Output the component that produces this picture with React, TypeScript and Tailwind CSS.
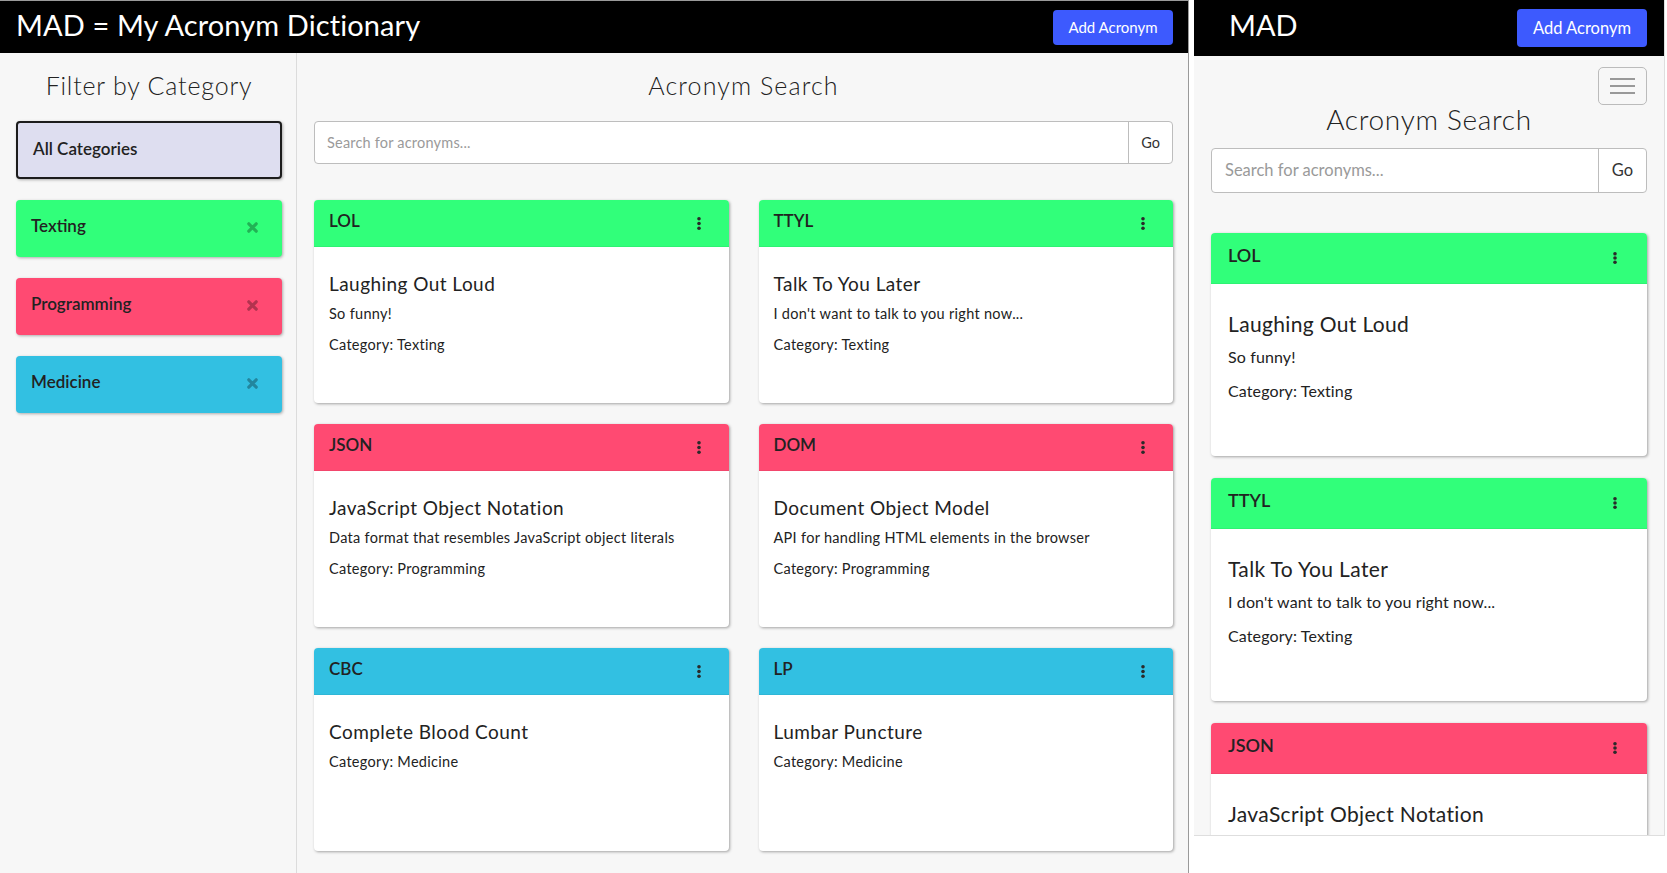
import React from "react";

const FONT = { fontFamily: "Lato, 'Open Sans', sans-serif" };

type Item = { abbr: string; name: string; desc?: string; cat: "Texting" | "Programming" | "Medicine" };

const CAT_BG: Record<string, string> = {
  Texting: "bg-[#31ff7a]",
  Programming: "bg-[#ff4a72]",
  Medicine: "bg-[#32c0e2]",
};

const ITEMS: Item[] = [
  { abbr: "LOL", name: "Laughing Out Loud", desc: "So funny!", cat: "Texting" },
  { abbr: "TTYL", name: "Talk To You Later", desc: "I don't want to talk to you right now...", cat: "Texting" },
  { abbr: "JSON", name: "JavaScript Object Notation", desc: "Data format that resembles JavaScript object literals", cat: "Programming" },
  { abbr: "DOM", name: "Document Object Model", desc: "API for handling HTML elements in the browser", cat: "Programming" },
  { abbr: "CBC", name: "Complete Blood Count", cat: "Medicine" },
  { abbr: "LP", name: "Lumbar Puncture", cat: "Medicine" },
];

function Kebab({ h = 13 }: { h?: number }) {
  return (
    <svg width="4" height={h} viewBox={`0 0 4 ${h}`} className="block">
      <circle cx="2" cy="1.8" r="1.8" fill="#2a2a2a" />
      <circle cx="2" cy={h / 2} r="1.8" fill="#2a2a2a" />
      <circle cx="2" cy={h - 1.8} r="1.8" fill="#2a2a2a" />
    </svg>
  );
}

function XIcon() {
  return (
    <svg width="11" height="11" viewBox="0 0 11 11" className="block">
      <path d="M1.8 1.8 L9.2 9.2 M9.2 1.8 L1.8 9.2" stroke="rgba(0,0,0,0.3)" strokeWidth="3.2" strokeLinecap="round" />
    </svg>
  );
}

function DesktopCard({ it }: { it: Item }) {
  return (
    <div className="h-[203px] rounded-[4px] bg-white overflow-hidden shadow-[1px_1px_3px_rgba(0,0,0,0.35)]">
      <div className={`h-[47px] ${CAT_BG[it.cat]} flex items-center justify-between pl-[15px] pr-[28px] border-b border-black/5`}>
        <span className="pb-[4px] text-[17px] font-semibold text-[#222]">{it.abbr}</span>
        <Kebab />
      </div>
      <div className="pl-[15px] pt-[25px] text-[#222] tracking-[0.3px]">
        <div className="text-[19px] leading-[23px] tracking-[0.45px]">{it.name}</div>
        {it.desc && <div className="mt-[9px] text-[14.5px] leading-[20px]">{it.desc}</div>}
        <div className={`${it.desc ? "mt-[11px]" : "mt-[9px]"} text-[14.5px] leading-[20px]`}>Category: {it.cat}</div>
      </div>
    </div>
  );
}

function MobileCard({ it }: { it: Item }) {
  return (
    <div className="h-[223px] shrink-0 rounded-[4px] bg-white overflow-hidden shadow-[1px_1px_3px_rgba(0,0,0,0.35)]">
      <div className={`h-[51px] ${CAT_BG[it.cat]} flex items-center justify-between pl-[17px] pr-[30px] border-b border-black/5`}>
        <span className="pb-[5px] text-[18px] font-semibold text-[#222]">{it.abbr}</span>
        <Kebab h={12} />
      </div>
      <div className="pl-[17px] pt-[27px] text-[#222] tracking-[0.12px]">
        <div className="text-[21px] leading-[25px] tracking-[0.35px]">{it.name}</div>
        {it.desc && <div className="mt-[10px] text-[16px] leading-[22px]">{it.desc}</div>}
        <div className={`${it.desc ? "mt-[12px]" : "mt-[10px]"} text-[16px] leading-[22px]`}>Category: {it.cat}</div>
      </div>
    </div>
  );
}

export default function App() {
  return (
    <div style={FONT} className="flex w-[1667px] h-[873px] bg-white overflow-hidden">
      {/* Desktop view */}
      <div className="w-[1189px] h-[873px] shrink-0 flex flex-col border-r border-t border-[#9a9a9a] bg-[#f7f7f7]">
        <header className="h-[52px] shrink-0 bg-black flex items-center justify-between pl-[16px] pr-[15px]">
          <span className="pb-[6px] text-white text-[29px] leading-none tracking-[0.1px]">MAD = My Acronym Dictionary</span>
          <button className="w-[120px] h-[35px] rounded-[4px] bg-[#3d5afe] text-white text-[15px]">Add Acronym</button>
        </header>
        <div className="flex flex-1 min-h-0">
          <aside className="w-[297px] shrink-0 border-r border-[#dcdcdc] pl-[16px] pr-[14px]">
            <h2 className="mt-[18px] text-center text-[25px] leading-[29px] font-light tracking-[0.8px] text-[#222]">Filter by Category</h2>
            <div className="mt-[21px] h-[58px] rounded-[4px] border-2 border-[#1c1c1c] bg-[#dedef0] flex items-center pl-[15px] shadow-[1px_1px_3px_rgba(0,0,0,0.3)]">
              <span className="pb-[3px] text-[17px] font-semibold text-[#222]">All Categories</span>
            </div>
            {(["Texting", "Programming", "Medicine"] as const).map((c) => (
              <div
                key={c}
                className={`mt-[21px] h-[57px] rounded-[4px] ${CAT_BG[c]} flex items-center justify-between pl-[15px] pr-[24px] shadow-[1px_1px_3px_rgba(0,0,0,0.3)]`}
              >
                <span className="pb-[5px] text-[17px] font-semibold text-[#222]">{c}</span>
                <div className="pb-[2px]">
                  <XIcon />
                </div>
              </div>
            ))}
          </aside>
          <main className="flex-1 pl-[17px] pr-[15px]">
            <h2 className="mt-[18px] text-center text-[25px] leading-[29px] font-light tracking-[1.1px] text-[#222]">Acronym Search</h2>
            <div className="mt-[21px] h-[43px] flex rounded-[4px] border border-[#bdbdbd] bg-white overflow-hidden">
              <div className="flex-1 flex items-center pl-[12px] text-[14.5px] tracking-[0.2px] text-[#9a9a9a]">Search for acronyms...</div>
              <div className="w-[44px] border-l border-[#bdbdbd] flex items-center justify-center text-[14.5px] text-[#333]">Go</div>
            </div>
            <div className="mt-[36px] grid grid-cols-2 gap-x-[30px] gap-y-[21px]">
              {ITEMS.map((it) => (
                <DesktopCard key={it.abbr} it={it} />
              ))}
            </div>
          </main>
        </div>
      </div>

      {/* Mobile view */}
      <div className="ml-[5px] w-[471px] h-[836px] shrink-0 flex flex-col border-r border-b border-[#dedede] bg-[#f7f7f7] overflow-hidden">
        <header className="h-[56px] shrink-0 bg-black flex items-center justify-between pl-[35px] pr-[17px]">
          <span className="pb-[7px] text-white text-[29px] leading-none">MAD</span>
          <button className="w-[130px] h-[38px] rounded-[4px] bg-[#3d5afe] text-white text-[16.5px]">Add Acronym</button>
        </header>
        <div className="flex flex-col pl-[17px] pr-[17px]">
          <div className="mt-[11px] flex justify-end">
            <div className="w-[49px] h-[38px] rounded-[5px] border border-[#bbb] flex flex-col items-center justify-center gap-[5px]">
              <div className="w-[25px] h-[2px] bg-[#999]" />
              <div className="w-[25px] h-[2px] bg-[#999]" />
              <div className="w-[25px] h-[2px] bg-[#999]" />
            </div>
          </div>
          <h2 className="-mt-[3px] text-center text-[28px] leading-[34px] font-light tracking-[0.7px] text-[#222]">Acronym Search</h2>
          <div className="mt-[12px] h-[45px] flex rounded-[4px] border border-[#bdbdbd] bg-white overflow-hidden">
            <div className="flex-1 flex items-center pl-[13px] text-[16.5px] text-[#9a9a9a]">Search for acronyms...</div>
            <div className="w-[48px] border-l border-[#bdbdbd] flex items-center justify-center text-[16.5px] text-[#333]">Go</div>
          </div>
          <div className="mt-[40px] flex flex-col gap-[22px]">
            {ITEMS.slice(0, 3).map((it) => (
              <MobileCard key={it.abbr} it={it} />
            ))}
          </div>
        </div>
      </div>
    </div>
  );
}
